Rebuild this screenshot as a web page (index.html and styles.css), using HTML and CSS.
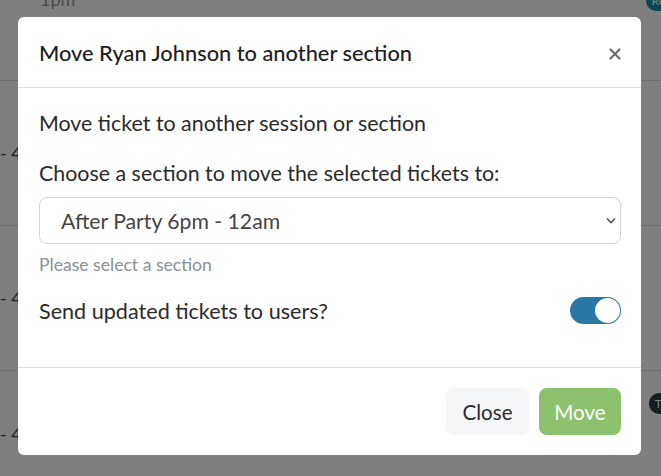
FILE: index.html
```html
<!DOCTYPE html>
<html>
<head>
<meta charset="utf-8">
<link rel="stylesheet" href="styles.css">
</head>
<body>
<div class="page">
  <div class="row first"><span class="time">1pm</span><span class="badge teal">Re</span></div>
  <div class="row"><span class="dash">- 4</span></div>
  <div class="row"><span class="dash">- 4</span></div>
  <div class="row last"><span class="dash">- 4</span><span class="badge dark">Tr</span></div>
</div>
<div class="overlay">
  <div class="modal">
    <div class="modal-header">
      <h2 class="title">Move Ryan Johnson to another section</h2>
      <span class="close-x">
        <svg width="12" height="12" viewBox="0 0 12 12"><path d="M1.5 1.5 L10.5 10.5 M10.5 1.5 L1.5 10.5" stroke="#6c6c6c" stroke-width="2.2" stroke-linecap="round"/></svg>
      </span>
    </div>
    <div class="modal-body">
      <p class="lead">Move ticket to another session or section</p>
      <label class="label">Choose a section to move the selected tickets to:</label>
      <div class="select">
        <span>After Party 6pm - 12am</span>
        <svg width="10" height="7" viewBox="0 0 10 7"><path d="M1 1.5 L5 5.5 L9 1.5" fill="none" stroke="#555" stroke-width="1.6"/></svg>
      </div>
      <div class="help">Please select a section</div>
      <div class="toggle-row">
        <span>Send updated tickets to users?</span>
        <span class="toggle"><span class="knob"></span></span>
      </div>
    </div>
    <div class="modal-footer">
      <button class="btn btn-light">Close</button>
      <button class="btn btn-green">Move</button>
    </div>
  </div>
</div>
</body>
</html>
```
FILE: styles.css
```css
* { box-sizing: border-box; }
html, body { margin: 0; padding: 0; }
body {
  width: 661px;
  height: 476px;
  overflow: hidden;
  background: #fff;
  font-family: "Lato", "Noto Sans", sans-serif;
  position: relative;
}
.page {
  display: flex;
  flex-direction: column;
  height: 476px;
  overflow: hidden;
}
.row {
  flex: none;
  height: 145px;
  border-bottom: 1px solid #ddd;
  display: flex;
  align-items: center;
  justify-content: space-between;
  color: #444;
  font-size: 18px;
}
.row.first {
  align-items: flex-start;
  margin-top: -12px;
  height: 93px;
}
.row.last { height: 115px; border-bottom: none; align-items: flex-start; padding-top: 52px; }
.time { margin-left: 40px; color: #999; }
.badge {
  font-size: 12px;
  padding: 3px 6px;
  border-radius: 10px;
  color: #fff;
  margin-right: -10px;
}
.badge.teal { background: #1b8da0; margin-top: 2px; }
.badge.dark { background: #343a40; margin-top: -30px; }
.overlay {
  position: absolute;
  inset: 0;
  background: rgba(0,0,0,0.5);
  padding: 17px 20px 0 18px;
}
.modal {
  width: 623px;
  height: 438px;
  background: #fff;
  border-radius: 6px;
  display: flex;
  flex-direction: column;
  color: #222;
}
.modal-header {
  height: 71px;
  border-bottom: 1px solid #dee2e6;
  display: flex;
  align-items: center;
  justify-content: space-between;
  padding: 0 20px 0 21px;
}
.title {
  margin: 0;
  font-size: 21.8px;
  font-weight: 500;
  color: #1e1e1e;
}
.close-x { display: flex; margin-top: 3px; }
.modal-body {
  padding: 23px 20px 0 21px;
  flex: 1;
  font-size: 21.4px;
  color: #2b2b2b;
}
.lead { margin: 0 0 26px; line-height: 24px; }
.label { display: block; line-height: 24px; margin-bottom: 12px; }
.select {
  height: 47px;
  border: 1px solid #d2d4d8;
  border-radius: 8px;
  display: flex;
  align-items: center;
  justify-content: space-between;
  padding: 0 4px 0 21px;
  font-size: 21.2px;
  color: #444;
}
.help {
  font-size: 17.6px;
  color: #8a9096;
  margin-top: 10px;
}
.toggle-row {
  display: flex;
  align-items: center;
  justify-content: space-between;
  margin-top: 22px;
  font-size: 21.6px;
}
.toggle {
  width: 51px;
  height: 27px;
  border-radius: 14px;
  background: #2a76a4;
  display: flex;
  align-items: center;
  justify-content: flex-end;
  padding: 1px;
}
.knob {
  width: 25px;
  height: 25px;
  border-radius: 50%;
  background: #fff;
}
.modal-footer {
  height: 88px;
  border-top: 1px solid #dee2e6;
  display: flex;
  justify-content: flex-end;
  align-items: center;
  gap: 10px;
  padding: 0 20px 0 0;
}
.btn {
  height: 47px;
  border: none;
  border-radius: 8px;
  font-family: inherit;
  font-size: 20.6px;
  padding: 0;
}
.btn-light { background: #f5f6f8; color: #2b2b2b; width: 83px; }
.btn-green { background: #8cc26e; color: #fff; width: 82px; }
```
